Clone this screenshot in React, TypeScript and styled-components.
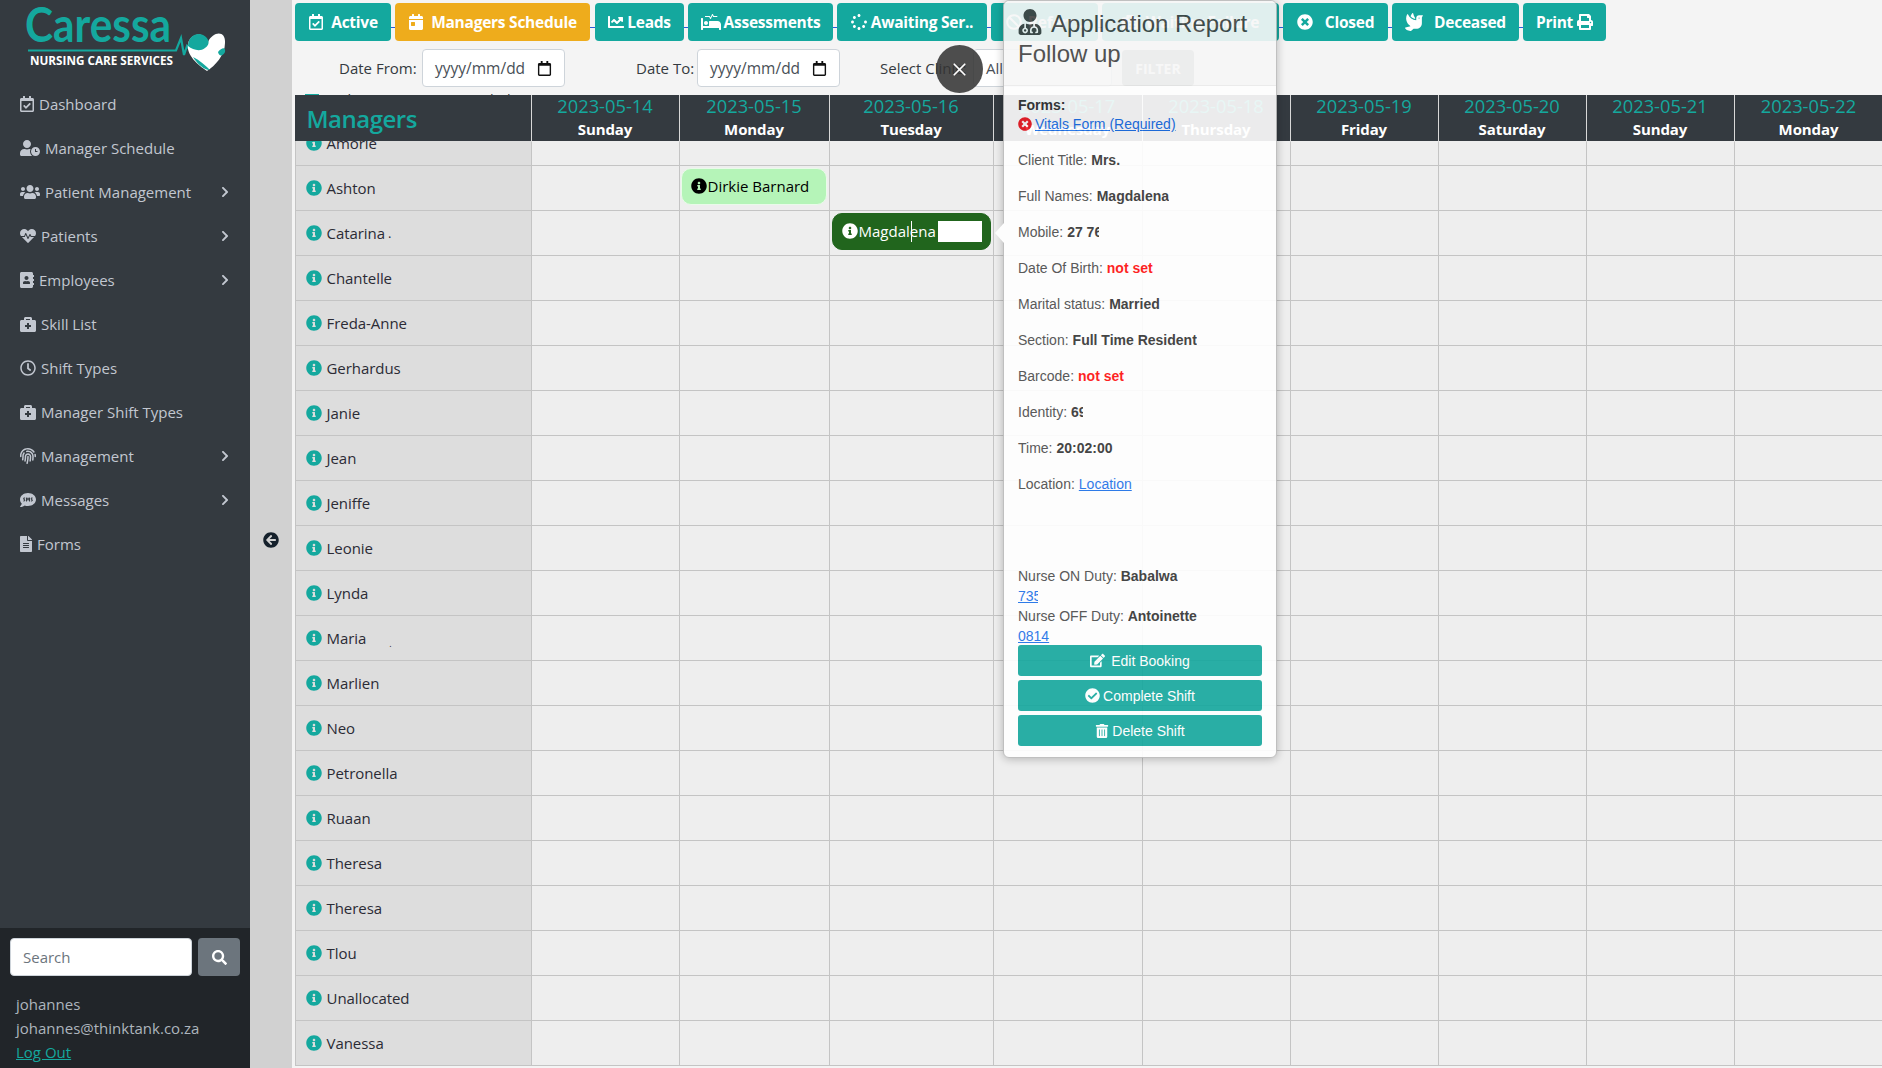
import React from 'react';
import styled, { createGlobalStyle } from 'styled-components';
import {
  FaRegCalendarCheck, FaUserClock, FaUsers, FaHeartbeat, FaAddressBook, FaBriefcaseMedical, FaRegClock,
  FaFingerprint, FaSms, FaFileAlt, FaChevronRight, FaInfoCircle, FaEdit, FaCheckCircle, FaTrashAlt, FaSearch,
  FaTimesCircle, FaCalendarDay, FaChartLine, FaProcedures, FaSpinner, FaBan, FaHospitalAlt, FaDove, FaPrint,
  FaUserMd, FaArrowCircleLeft, FaRegCalendar,
} from 'react-icons/fa';
import { X } from 'lucide-react';

const Global = createGlobalStyle`
  html, body { margin: 0; padding: 0; height: 100%; overflow: hidden; background: #f4f4f4; }
  * { box-sizing: border-box; }
  #root { height: 1068px; }
`;

const UI_FONT = `"Open Sans", "Noto Sans", sans-serif`;

const Page = styled.div`
  display: flex;
  width: 1882px;
  height: 1068px;
  overflow: hidden;
  font-family: ${UI_FONT};
  background: #f4f4f4;
`;

const Sidebar = styled.aside`
  flex: 0 0 250px;
  display: flex;
  flex-direction: column;
  background: #343a40;
`;

const LogoBox = styled.div`
  height: 82px;
`;

const Nav = styled.nav`
  flex: 1;
  display: flex;
  flex-direction: column;
`;

const NavItem = styled.a`
  height: 44px;
  display: flex;
  align-items: center;
  padding: 0 19px 0 20px;
  color: #c2c7d0;
  font-size: 15px;
  svg:first-child { height: 16px; width: ${p => p.$icon ?? 16}px; margin-right: 5px; flex: none; }
`;

const NavLabel = styled.span`
  flex: 1;
`;

const Chevron = styled(FaChevronRight)`
  font-size: 12px;
`;

const SidebarFoot = styled.div`
  height: 140px;
  background: #212529;
  padding: 10px 10px 0;
`;

const SearchRow = styled.div`
  display: flex;
  gap: 6px;
`;

const SearchInput = styled.div`
  width: 182px;
  height: 38px;
  background: #fff;
  border: 1px solid #ced4da;
  border-radius: 4px;
  padding: 0 12px;
  display: flex;
  align-items: center;
  color: #6c757d;
  font-size: 15px;
`;

const SearchButton = styled.div`
  width: 42px;
  height: 38px;
  background: #6c757d;
  border-radius: 4px;
  display: flex;
  align-items: center;
  justify-content: center;
  color: #fff;
  font-size: 15px;
`;

const UserInfo = styled.div`
  padding: 16px 6px 0;
  color: #adb5bd;
  font-size: 15px;
  line-height: 24px;
`;

const LogOut = styled.a`
  color: #14a89e;
  text-decoration: underline;
`;

const Gutter = styled.div`
  flex: 0 0 42px;
  background: #d1d1d1;
  display: flex;
  align-items: flex-start;
  justify-content: center;
  padding-top: 532px;
  font-size: 16px;
  color: #14202b;
`;

const Main = styled.main`
  position: relative;
  flex: 1;
  min-width: 0;
  padding: 3px 0 0 3px;
  background: #f4f4f4;
`;

const Toolbar = styled.div`
  display: flex;
  gap: 4px;
  width: fit-content;
  background: linear-gradient(#2a5bd7, #2a5bd7) 0 24px / 100% 1px no-repeat;
`;

const ToolButton = styled.a`
  flex: 0 0 ${p => p.$w}px;
  height: 38px;
  margin-left: ${p => p.$ml ?? 0}px;
  display: flex;
  align-items: center;
  justify-content: center;
  gap: ${p => p.$gap ?? 6}px;
  border-radius: 4px;
  background: ${p => (p.$active ? '#eeac1c' : '#14a89e')};
  color: #fff;
  font-size: 15.5px;
  font-weight: 700;
  letter-spacing: -0.25px;
  white-space: nowrap;
  svg { font-size: ${p => p.$icon ?? 16}px; flex: none; }
`;

const FilterRow = styled.div`
  height: 46px;
  margin-top: 8px;
  display: flex;
  align-items: flex-start;
  font-size: 15px;
  color: #343a40;
`;

const FilterLabel = styled.label`
  flex: 0 0 ${p => p.$w}px;
  min-width: 0;
  height: 38px;
  display: flex;
  align-items: center;
  white-space: nowrap;
  margin-left: ${p => p.$left}px;
  margin-right: 5px;
`;

const DateField = styled.div`
  width: 143px;
  height: 38px;
  background: #fff;
  border: 1px solid #ced4da;
  border-radius: 4px;
  padding: 0 12px;
  display: flex;
  align-items: center;
  justify-content: space-between;
  color: #495057;
  font-size: 15.5px;
  svg { font-size: 15px; color: #111; }
`;

const SelectField = styled.div`
  width: 139px;
  height: 38px;
  background: #fff;
  border: 1px solid #ced4da;
  border-radius: 4px;
  padding: 0 0 0 12px;
  display: flex;
  align-items: center;
  color: #495057;
`;

const FilterButton = styled.div`
  width: 72px;
  height: 36px;
  margin: 1px 0 0 10px;
  border-radius: 4px;
  background: #8d9492;
  color: #fff;
  font-size: 14px;
  font-weight: 700;
  display: flex;
  align-items: center;
  justify-content: center;
`;

const HiddenNote = styled.div`
  height: 0;
  display: flex;
  align-items: flex-start;
  gap: 6px;
  padding-left: 10px;
  font-size: 14.5px;
  line-height: 18px;
  color: #343a40;
  position: relative;
  top: -4px;
`;

const NoteSwatch = styled.span`
  width: 14px;
  height: 14px;
  margin-top: 3px;
  background: #14a89e;
  flex: none;
`;

const Table = styled.div`
  position: relative;
  margin-left: -0.5px;
`;

const HeaderRow = styled.div`
  position: relative;
  z-index: 2;
  display: grid;
  grid-template-columns: ${p => p.$cols};
  height: 46px;
  margin-bottom: -20px;
  background: #343a40;
`;

const ManagersTitle = styled.div`
  display: flex;
  align-items: center;
  padding-left: 12px;
  color: #14a89e;
  font-size: 24px;
  font-weight: 600;
  letter-spacing: -0.5px;
`;

const DayHead = styled.div`
  border-left: 1px solid #d8d8d8;
  display: flex;
  flex-direction: column;
  align-items: center;
`;

const DayDate = styled.span`
  color: #14a89e;
  font-size: 18.3px;
  line-height: 21px;
`;

const DayName = styled.span`
  color: #fff;
  font-size: 15px;
  font-weight: 700;
  line-height: 26px;
  letter-spacing: -0.1px;
`;

const Row = styled.div`
  display: grid;
  grid-template-columns: ${p => p.$cols};
  height: 45px;
  border-bottom: 1.5px solid #c4c4c4;
`;

const NameCell = styled.div`
  background: #dddddd;
  border-left: 1px solid #c4c4c4;
  display: flex;
  align-items: center;
  padding-left: 10px;
  gap: 5px;
  color: #2b2b35;
  font-size: 15px;
  letter-spacing: -0.05px;
  svg { color: #14a89e; font-size: 16px; flex: none; }
`;

const Speck = styled.span`
  margin-left: ${p => p.$left}px;
  font-size: ${p => p.$size}px;
  align-self: ${p => (p.$low ? 'flex-end' : 'center')};
  padding-bottom: ${p => (p.$low ? 10 : 0)}px;
`;

const DayCell = styled.div`
  background: #eeeeee;
  border-left: 1px solid #c4c4c4;
  padding: 2px;
  display: flex;
  align-items: flex-start;
`;

const Chip = styled.div`
  position: relative;
  flex: 1;
  height: 37px;
  margin-left: ${p => (p.$dark ? 0 : -1)}px;
  display: flex;
  align-items: center;
  gap: 1px;
  padding: 0 0 2px 9px;
  border-radius: 10px;
  border: 1px solid ${p => (p.$dark ? '#21651d' : '#e9fbe9')};
  background: ${p => (p.$dark ? '#21651d' : '#b5f4b8')};
  color: ${p => (p.$dark ? '#fff' : '#000')};
  font-size: 15px;
  svg { font-size: 16px; flex: none; color: ${p => (p.$dark ? '#fff' : '#000')}; }
`;

const ChipMask = styled.span`
  position: absolute;
  left: 105px;
  top: 7px;
  width: 44px;
  height: 21px;
  background: #fff;
`;

const Caret = styled.span`
  position: absolute;
  left: 78px;
  top: 7px;
  width: 1px;
  height: 21px;
  background: #fff;
`;

const Popover = styled.section`
  position: absolute;
  z-index: 5;
  left: 711px;
  top: 0;
  width: 274px;
  height: 758px;
  background: #fff;
  border: 1px solid #bbb;
  border-radius: 6px;
  box-shadow: 0 1px 8px rgba(0, 0, 0, 0.28);
  opacity: 0.9;
  font-family: "Liberation Sans", Arial, sans-serif;
  color: #4a4a4a;
  font-size: 14px;

  &::before {
    content: '';
    position: absolute;
    left: -9px;
    top: 222px;
    border-style: solid;
    border-width: 10px 9px 10px 0;
    border-color: transparent #fff transparent transparent;
  }
`;

const PopHead = styled.header`
  height: 85px;
  padding: 8px 14px 0;
  background: #f7f7f7;
  border-bottom: 1px solid #ebebeb;
  border-radius: 6px 6px 0 0;
  color: #404040;
  font-size: 24px;
  line-height: 30px;
  svg { font-size: 26px; margin: 0 8px 0 -1px; vertical-align: -3px; }
`;

const PopBody = styled.div`
  padding: 11px 14px 0;
`;

const FormsTitle = styled.div`
  font-weight: 700;
  line-height: 16px;
  color: #333;
`;

const RequiredLine = styled.div`
  display: flex;
  align-items: center;
  gap: 3px;
  height: 20px;
  margin: 1px 0 8px;
  svg { color: #ee1c25; font-size: 14px; }
`;

const LinkText = styled.a`
  color: #1a6fe8;
  text-decoration: underline;
  font-weight: 400;
`;

const Fact = styled.div`
  height: 36px;
  display: flex;
  align-items: center;
  gap: 4px;
`;

const Strong = styled.b`
  color: ${p => (p.$alert ? '#ff0d0d' : '#333')};
  display: inline-block;
  white-space: nowrap;
  overflow: hidden;
  vertical-align: top;
  max-width: ${p => p.$clip ?? 400}px;
`;

const DutyBlock = styled.div`
  margin-top: 64px;
  line-height: 20px;
`;

const DutyLine = styled.div`
  height: 20px;
`;

const ClippedLink = styled(LinkText)`
  display: inline-block;
  width: ${p => p.$w}px;
  overflow: hidden;
  white-space: nowrap;
  vertical-align: top;
`;

const Actions = styled.div`
  display: flex;
  flex-direction: column;
  gap: 4px;
  margin-top: -1px;
`;

const ActionButton = styled.a`
  height: 31px;
  display: flex;
  align-items: center;
  justify-content: center;
  gap: ${p => p.$gap}px;
  border-radius: 3px;
  background: #14a89e;
  color: #fff;
  font-size: 14px;
  svg { font-size: ${p => p.$icon ?? 15}px; }
`;

const CloseCircle = styled.div`
  position: absolute;
  z-index: 6;
  left: 644px;
  top: 45px;
  width: 47px;
  height: 48px;
  border-radius: 50%;
  background: rgba(52, 52, 52, 0.87);
  display: flex;
  align-items: center;
  justify-content: center;
  color: #fff;
`;

const COLS = '236px 148px 150px 164px 149px 148px 148px 148px 148px 149px';

const NAMES = ['Amorie', 'Ashton', 'Catarina', 'Chantelle', 'Freda-Anne', 'Gerhardus', 'Janie', 'Jean', 'Jeniffe', 'Leonie', 'Lynda', 'Maria', 'Marlien', 'Neo', 'Petronella', 'Ruaan', 'Theresa', 'Theresa', 'Tlou', 'Unallocated', 'Vanessa'];

const DAYS: [string, string][] = [
  ['2023-05-14', 'Sunday'], ['2023-05-15', 'Monday'], ['2023-05-16', 'Tuesday'], ['2023-05-17', 'Wednesday'], ['2023-05-18', 'Thursday'],
  ['2023-05-19', 'Friday'], ['2023-05-20', 'Saturday'], ['2023-05-21', 'Sunday'], ['2023-05-22', 'Monday'],
];

const Logo = () => (
  <svg width="250" height="82" viewBox="0 0 250 82">
    <text x="25" y="42" fill="#14a89e" fontFamily="Lato, sans-serif" fontWeight="700" fontSize="47" textLength="146" lengthAdjust="spacingAndGlyphs">Caressa</text>
    <path d="M28 50.5H176L181 38L184 55L187 46L190 50H196" fill="none" stroke="#14a89e" strokeWidth="2.2" />
    <text x="30" y="65" fill="#fff" fontFamily="'Open Sans', sans-serif" fontWeight="700" fontSize="11.5" textLength="143" lengthAdjust="spacingAndGlyphs">NURSING CARE SERVICES</text>
    <path d="M207 71C198 65 186 55 188 44C190 34 203 30 208 42C213 31 226 30 225 43C225 55 215 66 207 71Z" fill="#fff" />
    <path d="M188 46C188 36 197 32 203 35C209 38 211 44 205 48C200 52 193 50 188 46Z" fill="#14a89e" />
    <path d="M218 52C222 47 226 47 225 52C223 56 219 57 218 52Z" fill="#14a89e" />
    <path d="M193 57C199 60 205 65 210 70C206 71 198 65 193 57Z" fill="#14a89e" />
  </svg>
);

export default function App() {
  return (
    <Page>
      <Global />
      <Sidebar>
        <LogoBox><Logo /></LogoBox>
        <Nav>
          <NavItem $icon={14}><FaRegCalendarCheck /><NavLabel>Dashboard</NavLabel></NavItem>
          <NavItem $icon={20}><FaUserClock /><NavLabel>Manager Schedule</NavLabel></NavItem>
          <NavItem $icon={20}><FaUsers /><NavLabel>Patient Management</NavLabel><Chevron /></NavItem>
          <NavItem><FaHeartbeat /><NavLabel>Patients</NavLabel><Chevron /></NavItem>
          <NavItem $icon={14}><FaAddressBook /><NavLabel>Employees</NavLabel><Chevron /></NavItem>
          <NavItem><FaBriefcaseMedical /><NavLabel>Skill List</NavLabel></NavItem>
          <NavItem><FaRegClock /><NavLabel>Shift Types</NavLabel></NavItem>
          <NavItem><FaBriefcaseMedical /><NavLabel>Manager Shift Types</NavLabel></NavItem>
          <NavItem><FaFingerprint /><NavLabel>Management</NavLabel><Chevron /></NavItem>
          <NavItem><FaSms /><NavLabel>Messages</NavLabel><Chevron /></NavItem>
          <NavItem $icon={12}><FaFileAlt /><NavLabel>Forms</NavLabel></NavItem>
        </Nav>
        <SidebarFoot>
          <SearchRow>
            <SearchInput>Search</SearchInput>
            <SearchButton><FaSearch /></SearchButton>
          </SearchRow>
          <UserInfo>
            <div>johannes</div>
            <div>johannes@thinktank.co.za</div>
            <LogOut>Log Out</LogOut>
          </UserInfo>
        </SidebarFoot>
      </Sidebar>
      <Gutter><FaArrowCircleLeft /></Gutter>
      <Main>
        <Toolbar>
          <ToolButton $w={96} $gap={7}><FaRegCalendarCheck />Active</ToolButton>
          <ToolButton $w={195} $active $gap={7}><FaCalendarDay />Managers Schedule</ToolButton>
          <ToolButton $w={89} $ml={1} $gap={3}><FaChartLine />Leads</ToolButton>
          <ToolButton $w={145} $gap={3} $icon={20}><FaProcedures />Assessments</ToolButton>
          <ToolButton $w={150} $gap={4}><FaSpinner />Awaiting Ser..</ToolButton>
          <ToolButton $w={107}><FaBan />Referr..</ToolButton>
          <ToolButton $w={177} $gap={8}><FaHospitalAlt />Waiting Failure</ToolButton>
          <ToolButton $w={105} $gap={12}><FaTimesCircle />Closed</ToolButton>
          <ToolButton $w={127} $gap={11} $icon={18}><FaDove />Deceased</ToolButton>
          <ToolButton $w={83} $gap={4}>Print<FaPrint /></ToolButton>
        </Toolbar>
        <FilterRow>
          <FilterLabel $left={44} $w={78}>Date From:</FilterLabel>
          <DateField>yyyy/mm/dd<FaRegCalendar /></DateField>
          <FilterLabel $left={71} $w={56}>Date To:</FilterLabel>
          <DateField>yyyy/mm/dd<FaRegCalendar /></DateField>
          <FilterLabel $left={40} $w={88}>Select Clinic:</FilterLabel>
          <SelectField>All</SelectField>
          <FilterButton>FILTER</FilterButton>
        </FilterRow>
        <HiddenNote><NoteSwatch />Night Manager Not Needed</HiddenNote>
        <Table>
          <HeaderRow $cols={COLS}>
            <ManagersTitle>Managers</ManagersTitle>
            {DAYS.map(([d, n], i) => (
              <DayHead key={i}><DayDate>{d}</DayDate><DayName>{n}</DayName></DayHead>
            ))}
          </HeaderRow>
          {NAMES.map((name, r) => (
            <Row key={r} $cols={COLS}>
              <NameCell>
                <FaInfoCircle />
                {name}
                {name === 'Catarina' && <Speck $left={-2} $size={13}>.</Speck>}
                {name === 'Maria' && <Speck $left={18} $size={9} $low>.</Speck>}
              </NameCell>
              {DAYS.map((_, c) => (
                <DayCell key={c}>
                  {r === 1 && c === 1 && <Chip><FaInfoCircle />Dirkie Barnard</Chip>}
                  {r === 2 && c === 2 && (
                    <Chip $dark><FaInfoCircle />Magdalena<ChipMask /><Caret /></Chip>
                  )}
                </DayCell>
              ))}
            </Row>
          ))}
        </Table>
        <Popover>
          <PopHead><FaUserMd />Application Report Follow up</PopHead>
          <PopBody>
            <FormsTitle>Forms:</FormsTitle>
            <RequiredLine><FaTimesCircle /><LinkText>Vitals Form (Required)</LinkText></RequiredLine>
            <Fact>Client Title: <Strong>Mrs.</Strong></Fact>
            <Fact>Full Names: <Strong>Magdalena</Strong></Fact>
            <Fact>Mobile: <Strong $clip={32}>27 76 000</Strong></Fact>
            <Fact>Date Of Birth: <Strong $alert>not set</Strong></Fact>
            <Fact>Marital status: <Strong>Married</Strong></Fact>
            <Fact>Section: <Strong>Full Time Resident</Strong></Fact>
            <Fact>Barcode: <Strong $alert>not set</Strong></Fact>
            <Fact>Identity: <Strong $clip={12}>6900</Strong></Fact>
            <Fact>Time: <Strong>20:02:00</Strong></Fact>
            <Fact>Location: <LinkText>Location</LinkText></Fact>
            <DutyBlock>
              <DutyLine>Nurse ON Duty: <Strong>Babalwa</Strong></DutyLine>
              <DutyLine><ClippedLink $w={20}>7350</ClippedLink></DutyLine>
              <DutyLine>Nurse OFF Duty: <Strong>Antoinette</Strong></DutyLine>
              <DutyLine><LinkText>0814</LinkText></DutyLine>
            </DutyBlock>
            <Actions>
              <ActionButton $gap={6}><FaEdit />Edit Booking</ActionButton>
              <ActionButton $gap={3}><FaCheckCircle />Complete Shift</ActionButton>
              <ActionButton $gap={3} $icon={14}><FaTrashAlt />Delete Shift</ActionButton>
            </Actions>
          </PopBody>
        </Popover>
        <CloseCircle><X size={21} strokeWidth={2} /></CloseCircle>
      </Main>
    </Page>
  );
}
